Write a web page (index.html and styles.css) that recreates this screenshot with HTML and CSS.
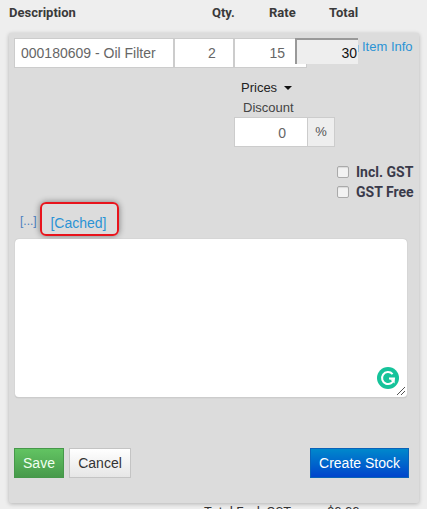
FILE: index.html
```html
<!DOCTYPE html>
<html>
<head>
<meta charset="utf-8">
<title>Line item</title>
<link rel="stylesheet" href="styles.css">
</head>
<body>
<div class="page">
  <div class="head">
    <span class="h-desc">Description</span>
    <span class="h-qty">Qty.</span>
    <span class="h-rate">Rate</span>
    <span class="h-total">Total</span>
  </div>
  <div class="panel">
    <div class="row">
      <input class="field f-desc" value="000180609 - Oil Filter">
      <input class="field f-qty" value="2">
      <input class="field f-rate" value="15">
      <div class="total">30</div>
      <a class="info">Item Info</a>
    </div>
    <div class="pricing">
      <div class="prices">Prices<span class="caret"></span></div>
      <div class="discount-label">Discount</div>
      <div class="discount">
        <input class="field f-disc" value="0">
        <span class="addon">%</span>
      </div>
    </div>
    <div class="checks">
      <label class="check"><span class="box"></span>Incl. GST</label>
      <label class="check"><span class="box"></span>GST Free</label>
    </div>
    <div class="links">
      <a class="dots">[...]</a>
      <a class="cached">[Cached]</a>
    </div>
    <div class="note">
      <svg class="grammarly" width="22" height="22" viewBox="0 0 22 22">
        <circle cx="11" cy="11" r="11" fill="#15c39a"/>
        <path d="M15.6 7.2A6 6 0 1 0 17 11.6h-5" fill="none" stroke="#fff" stroke-width="2"/>
        <path d="M13 9.2l4.6 0 0 4.4z" fill="#fff" transform="translate(0 3)"/>
      </svg>
      <svg class="grip" width="10" height="10" viewBox="0 0 10 10">
        <path d="M1 9L9 1M5 9L9 5" stroke="#555" stroke-width="1"/>
      </svg>
    </div>
    <div class="actions">
      <button class="btn save">Save</button>
      <button class="btn cancel">Cancel</button>
      <button class="btn create">Create Stock</button>
    </div>
  </div>
  <div class="below"><span>Total Excl. GST</span><span>$0.00</span></div>
</div>
</body>
</html>
```

FILE: styles.css
```css
* { box-sizing: border-box; }
html, body { margin: 0; padding: 0; }
body { background: #eeeeee; font-family: "Liberation Sans", Arial, sans-serif; color: #333; }
.page { width: 427px; height: 509px; overflow: hidden; }
.head { display: flex; height: 33px; padding: 5px 0 0 9px; font-family: Roboto, sans-serif; font-size: 13px; font-weight: 700; line-height: 16px; color: #3a3a3a; }
.h-desc { width: 203px; }
.h-qty { width: 57px; }
.h-rate { width: 60px; }
.panel { margin-left: 9px; width: 410px; height: 470px; background: #dcdcdc; box-shadow: 0 1px 4px rgba(0,0,0,.25); border-radius: 2px; padding: 5px 5px 0; }
.row { display: flex; height: 30px; }
.field { height: 30px; border: 1px solid #ccc; background: #fff; font: 14px "Liberation Sans", Arial, sans-serif; color: #666; padding: 0 6px; outline: none; border-radius: 0; }
.f-desc { width: 160px; }
.f-qty { width: 60px; text-align: center; padding-left: 22px; }
.f-rate { width: 73px; text-align: right; padding-right: 21px; }
.total { width: 63px; height: 26px; margin-left: -12px; position: relative; background: #eee; border-top: 2px solid #999; border-left: 2px solid #999; font-size: 14px; line-height: 27px; text-align: right; color: #111; padding-right: 1px; }
.info { font-size: 13px; line-height: 18px; color: #2a93d5; white-space: nowrap; }
.info::before { content: ""; display: inline-block; width: 1px; height: 7px; margin-right: 3px; vertical-align: -1px; background: #8fc3e6; }
.pricing { display: flex; flex-direction: column; width: 100px; margin-left: 220px; }
.prices { margin-top: 10px; height: 20px; font-size: 13px; line-height: 20px; color: #222; margin-left: 7px; }
.caret { display: inline-block; margin-left: 7px; vertical-align: 2px; border-left: 4px solid transparent; border-right: 4px solid transparent; border-top: 4px solid #111; }
.discount-label { font-size: 13px; line-height: 20px; height: 19px; color: #444; margin-left: 9px; }
.discount { display: flex; width: 101px; height: 30px; }
.f-disc { width: 74px; text-align: right; padding-right: 21px; padding-top: 2px; }
.addon { width: 27px; height: 30px; border: 1px solid #ccc; border-left: 0; background: #eee; font-size: 13px; line-height: 28px; text-align: center; color: #555; }
.checks { display: flex; flex-direction: column; align-items: flex-end; margin-top: 15px; margin-right: -1px; }
.check { display: flex; align-items: center; height: 20px; font-family: Roboto, sans-serif; font-size: 14px; font-weight: 700; color: #3a3a4a; width: 78px; }
.box { width: 12px; height: 12px; margin-right: 7px; border: 1px solid #aaa; border-radius: 2px; background: #f2f2f2; box-shadow: inset 0 1px 1px rgba(0,0,0,.1); }
.links { display: flex; align-items: flex-start; height: 37px; margin-top: -1px; padding-left: 6px; font-size: 14px; color: #2a93d5; }
.dots { color: #4a7fc0; margin-top: 12px; font-size: 12px; line-height: 16px; width: 16px; }
.cached { display: block; margin-left: 4px; width: 79px; height: 34px; border: 2px solid #e8141c; border-radius: 6px; text-align: center; line-height: 38px; padding-right: 2px; box-shadow: 0 0 6px rgba(0,0,0,.45); margin-top: 1px; }
.note { position: relative; width: 392px; height: 159px; margin-left: 1px; margin-top: 1px; background: #fff; border-radius: 4px; border-bottom: 1px solid #ccc; box-shadow: 0 0 1px rgba(0,0,0,.25); }
.grammarly { position: absolute; right: 8px; bottom: 8px; }
.grip { position: absolute; right: 1px; bottom: 1px; }
.actions { display: flex; margin-top: 50px; }
.btn { height: 30px; font: 14px "Liberation Sans", Arial, sans-serif; border-radius: 0; padding: 0; }
.save { width: 50px; color: #f0fff0; border: 1px solid #46984a; background: linear-gradient(#62c462, #479a4b); }
.cancel { width: 62px; margin-left: 5px; color: #333; border: 1px solid #c4c4c4; background: linear-gradient(#fff, #e6e6e6); }
.create { width: 99px; margin-left: auto; margin-right: 5px; color: #fff; border: 1px solid #0a62b8; background: linear-gradient(#0088cc, #0044cc); }
.below { display: flex; padding-left: 204px; height: 16px; margin-top: 1px; font-family: Roboto, sans-serif; font-size: 13px; color: #333; gap: 36px; }
```
